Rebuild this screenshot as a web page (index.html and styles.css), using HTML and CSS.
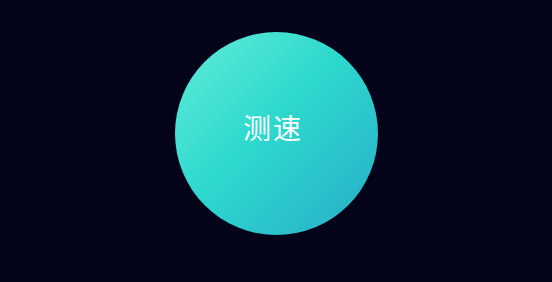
FILE: index.html
```html
<!DOCTYPE html>
<html lang="zh">
<head>
<meta charset="utf-8">
<link rel="stylesheet" href="styles.css">
</head>
<body>
<main class="stage">
  <button class="speed-btn">测速</button>
</main>
</body>
</html>
```
FILE: styles.css
```css
html, body {
  margin: 0;
  padding: 0;
  background: #03031a;
}
.stage {
  width: 552px;
  height: 282px;
  display: flex;
  justify-content: center;
  padding-top: 32px;
  box-sizing: border-box;
}
.speed-btn {
  width: 203px;
  height: 203px;
  border: none;
  border-radius: 50%;
  background: linear-gradient(135deg, #62edda 0%, #2ed9cd 45%, #27adc8 100%);
  color: #ffffff;
  font-family: "Noto Sans CJK SC", "Noto Sans", sans-serif;
  font-size: 28px;
  font-weight: 400;
  display: flex;
  align-items: center;
  justify-content: center;
  padding: 0 6px 14px 0;
  box-sizing: border-box;
  letter-spacing: 2px;
}
```
